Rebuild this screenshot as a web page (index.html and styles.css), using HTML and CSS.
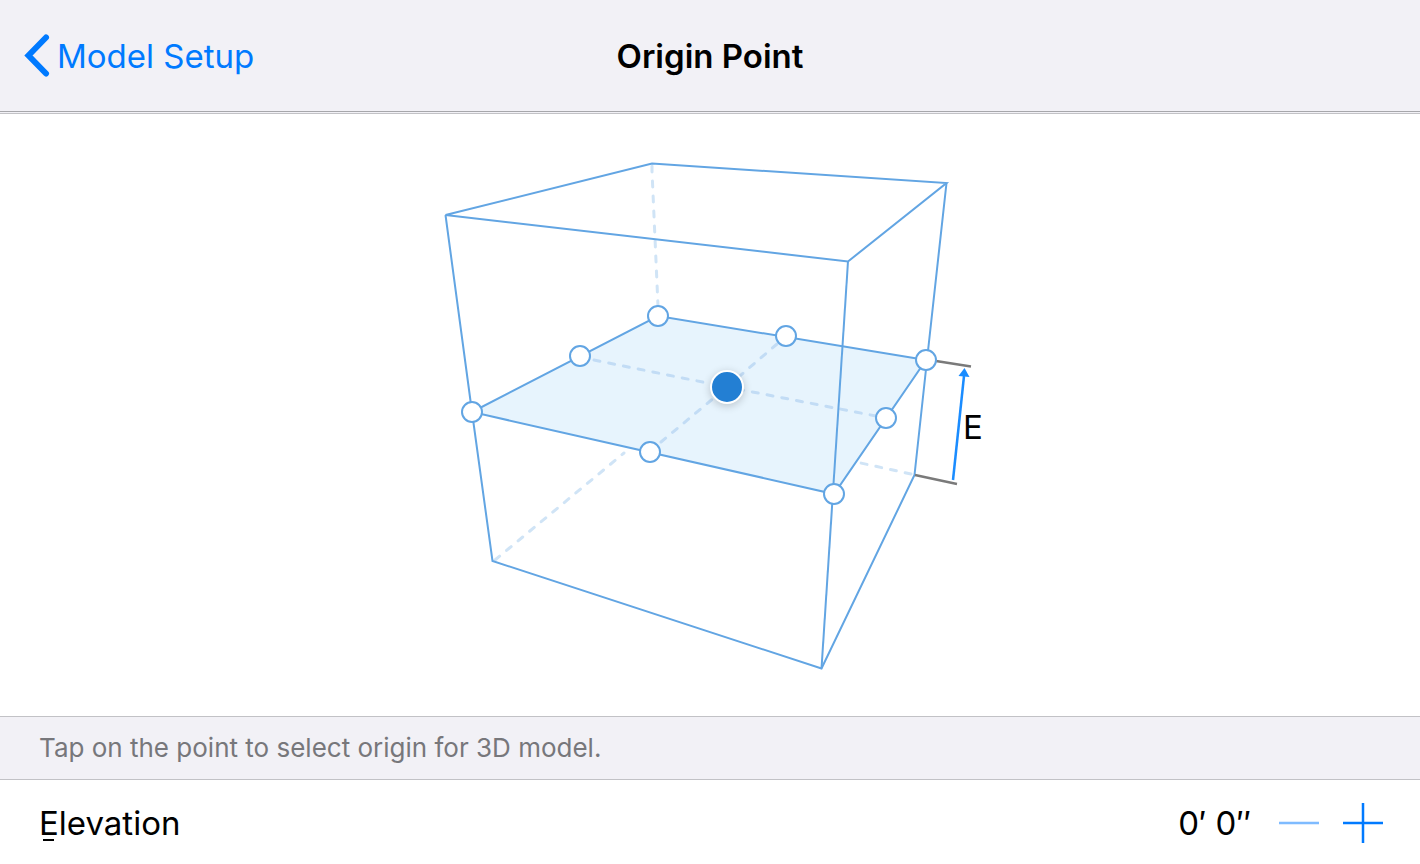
FILE: index.html
```
<!DOCTYPE html>
<html lang="en">
<head>
  <meta charset="UTF-8">
  <meta name="viewport" content="width=device-width, initial-scale=1.0">
  <title>Origin Point</title>
  <link rel="stylesheet" href="styles.css">
</head>
<body>
  <header class="navbar">
    <a class="back" href="#">
      <svg width="26" height="44" viewBox="0 0 26 44" aria-hidden="true">
        <path d="M22 3.5 4.5 21.5 22 39.5" fill="none" stroke="currentColor" stroke-width="6" stroke-linecap="round"/>
      </svg>
      <span>Model Setup</span>
    </a>
    <h1 class="title">Origin Point</h1>
  </header>

  <main class="stage">
    <div class="diagram">
      <svg class="box" width="600" height="602" viewBox="0 0 600 602" aria-hidden="true">
        <polygon class="plane" points="62,298 248,202 516,246 424,380"/>

        <!-- hidden edges -->
        <path class="hidden" d="M242 52V57L248 192"/>
        <path class="hidden" d="M85 446 214 339"/>
        <path class="hidden" d="M501 360 446 348"/>

        <!-- centre lines of the plane -->
        <path class="guide" d="M184 246 317 273M466 302 317 273"/>
        <path class="guide" d="M367 230 317 273M251 328 317 273"/>

        <!-- visible edges -->
        <path class="edge" d="M35.5 101 242 49.5 536.5 69 438 147.5Z"/>
        <path class="edge" d="M35.5 101 62 298 82.5 447 411.5 554.5 504.5 361 517 246 536.5 69"/>
        <path class="edge" d="M438 147.5 411.5 554.5"/>
        <path class="edge" d="M62 298 248 202 516 246 424 380Z"/>

        <!-- elevation dimension -->
        <path class="tick" d="M526 247 561 252.5M505 361 547 370"/>
        <path class="arrow" d="M543 366 554 262"/>
        <polygon class="arrow-head" points="554.5,254 559.5,263 548.5,262"/>
        <text class="mark" x="553" y="325">E</text>
      </svg>

      <input class="point back-left" type="radio" name="origin" aria-label="Back left">
      <input class="point back-middle" type="radio" name="origin" aria-label="Back middle">
      <input class="point back-right" type="radio" name="origin" aria-label="Back right">
      <input class="point middle-left" type="radio" name="origin" aria-label="Middle left">
      <input class="point center" type="radio" name="origin" aria-label="Center" checked>
      <input class="point middle-right" type="radio" name="origin" aria-label="Middle right">
      <input class="point front-left" type="radio" name="origin" aria-label="Front left">
      <input class="point front-middle" type="radio" name="origin" aria-label="Front middle">
      <input class="point front-right" type="radio" name="origin" aria-label="Front right">
    </div>
  </main>

  <p class="hint">Tap on the point to select origin for 3D model.</p>

  <div class="row">
    <span class="label"><span class="key">E</span>levation</span>
    <output class="value">0′ 0″</output>
    <div class="stepper">
      <button type="button" aria-label="Decrease elevation" disabled>
        <svg width="40" height="40" viewBox="0 0 40 40"><path d="M0 20H40" stroke="currentColor" stroke-width="2.5"/></svg>
      </button>
      <button type="button" aria-label="Increase elevation">
        <svg width="40" height="40" viewBox="0 0 40 40"><path d="M0 20H40M20 0V40" stroke="currentColor" stroke-width="2.5"/></svg>
      </button>
    </div>
  </div>
</body>
</html>
```
FILE: styles.css
```
* {
  box-sizing: border-box;
}

body {
  margin: 0;
  min-height: 100vh;
  display: flex;
  flex-direction: column;
  background-color: #f2f1f6;
  color: #000;
  font-family: Inter, "Liberation Sans", sans-serif;
  font-size: 33px;
  line-height: 40px;
}

.navbar {
  display: grid;
  grid-template-columns: 1fr auto 1fr;
  align-items: center;
  height: 112px;
  padding: 0 24px;
  border-bottom: 1px solid #a7a7ab;
}

.back {
  display: flex;
  align-items: center;
  gap: 7px;
  color: #007aff;
  text-decoration: none;
}

.title {
  margin: 0;
  font-size: 33px;
  font-weight: 600;
}

.stage {
  flex: 1;
  display: flex;
  justify-content: center;
  align-items: center;
  margin-top: 1px;
  border-top: 1px solid #c2c2c6;
  background-color: #fff;
}

.diagram {
  position: relative;
  width: 600px;
}

.box {
  display: block;
}

.plane {
  fill: #e7f4fd;
}

.edge {
  fill: none;
  stroke: #62a5e3;
  stroke-width: 2;
}

.hidden,
.guide {
  fill: none;
  stroke: #d0e4f6;
  stroke-width: 3;
  stroke-linecap: round;
  stroke-dasharray: 6 9;
}

.guide {
  stroke: #c2dcf5;
}

.tick {
  stroke: #7a7a7a;
  stroke-width: 2.5;
}

.arrow {
  stroke: #1a8cff;
  stroke-width: 2.5;
}

.arrow-head {
  fill: #1a8cff;
}

.mark {
  font-size: 33px;
}

/* selectable points, placed on the drawing */
.point {
  position: absolute;
  appearance: none;
  width: 22px;
  height: 22px;
  margin: 0;
  border: 2px solid #62a5e3;
  border-radius: 50%;
  background-color: #fff;
  transform: translate(-50%, -50%);
  cursor: pointer;
}

.point:checked {
  width: 34px;
  height: 34px;
  border-color: #fff;
  background-color: #237fd3;
  box-shadow: 0 2px 8px rgba(0, 0, 0, 0.2);
}

.back-left { left: 248px; top: 202px; }
.back-middle { left: 376px; top: 222px; }
.back-right { left: 516px; top: 246px; }
.middle-left { left: 170px; top: 242px; }
.center { left: 317px; top: 273px; }
.middle-right { left: 476px; top: 304px; }
.front-left { left: 62px; top: 298px; }
.front-middle { left: 240px; top: 338px; }
.front-right { left: 424px; top: 380px; }

.hint {
  margin: 0;
  padding: 15px 39px;
  border-top: 1px solid #c2c2c6;
  border-bottom: 1px solid #c2c2c6;
  color: #77777b;
  font-size: 26px;
  line-height: 32px;
}

.row {
  display: flex;
  align-items: center;
  height: 84px;
  padding: 2px 37px 0 39px;
  background-color: #fff;
}

.label {
  flex: 1;
}

.key {
  position: relative;
}

.key::after {
  content: "";
  position: absolute;
  left: 4px;
  bottom: 2px;
  width: 11px;
  height: 2px;
  background-color: #000;
}

.value {
  margin-right: 28px;
}

.stepper {
  display: flex;
  gap: 24px;
}

.stepper button {
  padding: 0;
  border: none;
  background: none;
  color: #007aff;
  cursor: pointer;
}

.stepper button:disabled {
  opacity: 0.5;
  cursor: default;
}

.stepper svg {
  display: block;
}
```
